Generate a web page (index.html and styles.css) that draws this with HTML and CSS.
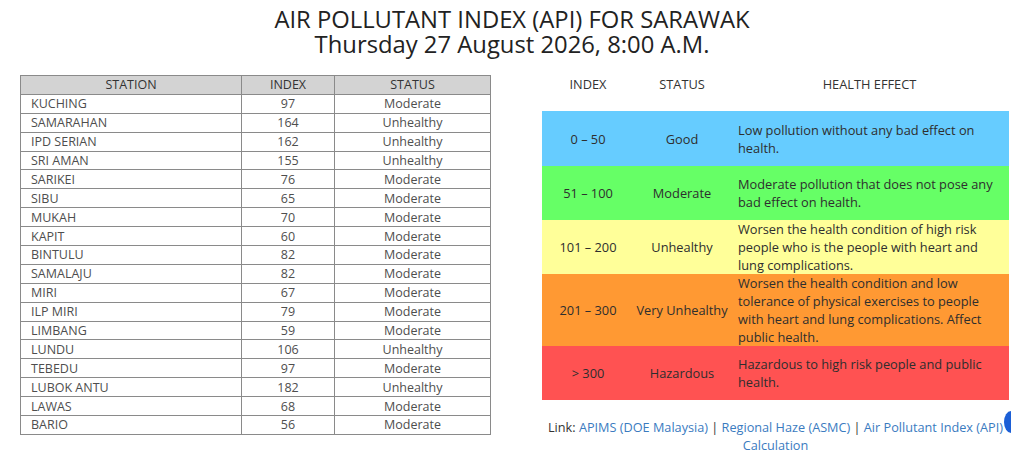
FILE: index.html
```html
<!DOCTYPE html>
<html>
<head>
<meta charset="utf-8">
<link rel="stylesheet" href="styles.css">
</head>
<body>
<header class="title">
  <h1>AIR POLLUTANT INDEX (API) FOR SARAWAK</h1>
  <h2>Thursday 27 August 2026, 8:00 A.M.</h2>
</header>
<main class="content">
  <table class="stations">
    <thead>
      <tr><th class="c-station">STATION</th><th class="c-index">INDEX</th><th class="c-status">STATUS</th></tr>
    </thead>
    <tbody>
      <tr><td>KUCHING</td><td>97</td><td>Moderate</td></tr>
      <tr><td>SAMARAHAN</td><td>164</td><td>Unhealthy</td></tr>
      <tr><td>IPD SERIAN</td><td>162</td><td>Unhealthy</td></tr>
      <tr><td>SRI AMAN</td><td>155</td><td>Unhealthy</td></tr>
      <tr><td>SARIKEI</td><td>76</td><td>Moderate</td></tr>
      <tr><td>SIBU</td><td>65</td><td>Moderate</td></tr>
      <tr><td>MUKAH</td><td>70</td><td>Moderate</td></tr>
      <tr><td>KAPIT</td><td>60</td><td>Moderate</td></tr>
      <tr><td>BINTULU</td><td>82</td><td>Moderate</td></tr>
      <tr><td>SAMALAJU</td><td>82</td><td>Moderate</td></tr>
      <tr><td>MIRI</td><td>67</td><td>Moderate</td></tr>
      <tr><td>ILP MIRI</td><td>79</td><td>Moderate</td></tr>
      <tr><td>LIMBANG</td><td>59</td><td>Moderate</td></tr>
      <tr><td>LUNDU</td><td>106</td><td>Unhealthy</td></tr>
      <tr><td>TEBEDU</td><td>97</td><td>Moderate</td></tr>
      <tr><td>LUBOK ANTU</td><td>182</td><td>Unhealthy</td></tr>
      <tr><td>LAWAS</td><td>68</td><td>Moderate</td></tr>
      <tr><td>BARIO</td><td>56</td><td>Moderate</td></tr>
    </tbody>
  </table>

  <section class="legend">
    <div class="legend-head">
      <div>INDEX</div><div>STATUS</div><div>HEALTH EFFECT</div>
    </div>
    <div class="band good">
      <div class="b-index">0 – 50</div><div class="b-status">Good</div>
      <div class="b-effect">Low pollution without any bad effect on health.</div>
    </div>
    <div class="band moderate">
      <div class="b-index">51 – 100</div><div class="b-status">Moderate</div>
      <div class="b-effect">Moderate pollution that does not pose any bad effect on health.</div>
    </div>
    <div class="band unhealthy">
      <div class="b-index">101 – 200</div><div class="b-status">Unhealthy</div>
      <div class="b-effect">Worsen the health condition of high risk people who is the people with heart and lung complications.</div>
    </div>
    <div class="band very">
      <div class="b-index">201 – 300</div><div class="b-status">Very Unhealthy</div>
      <div class="b-effect">Worsen the health condition and low tolerance of physical exercises to people with heart and lung complications. Affect public health.</div>
    </div>
    <div class="band hazardous">
      <div class="b-index">&gt; 300</div><div class="b-status">Hazardous</div>
      <div class="b-effect">Hazardous to high risk people and public health.</div>
    </div>
    <p class="links">Link: <a href="#">APIMS (DOE Malaysia)</a> | <a href="#">Regional Haze (ASMC)</a> | <a href="#">Air Pollutant Index (API) Calculation</a></p>
  </section>
</main>
<div class="edge-button"></div>
</body>
</html>
```

FILE: styles.css
```css
html, body {
  margin: 0;
  padding: 0;
  background: #ffffff;
}
body {
  font-family: "Open Sans", "DejaVu Sans", sans-serif;
  color: #333333;
  width: 1024px;
  height: 462px;
  overflow: hidden;
  position: relative;
}
.title {
  text-align: center;
  padding-top: 7px;
  color: #222222;
}
.title h1, .title h2 {
  margin: 0;
  font-weight: 400;
  font-size: 23.8px;
  line-height: 25px;
}
.content {
  display: flex;
  align-items: flex-start;
  padding-left: 20px;
  margin-top: 18px;
}
.stations {
  width: 471px;
  border-collapse: collapse;
  font-size: 12.5px;
  color: #4e4e4e;
  border: 1px solid #8a8a8a;
}
.stations th, .stations td {
  border: 1px solid #8a8a8a;
  height: 17.9px;
  padding: 0 10px;
  line-height: 17px;
  font-weight: 400;
}
.stations th {
  background: #d3d3d3;
  color: #333333;
  text-align: center;
}
.stations td:nth-child(2), .stations td:nth-child(3) {
  text-align: center;
}
.c-station { width: 200px; }
.c-index { width: 72px; }
.legend {
  margin-left: 51px;
  width: 467px;
}
.legend-head, .band {
  display: grid;
  grid-template-columns: 92px 96px 1fr;
}
.legend-head {
  font-size: 12.8px;
  color: #333333;
  text-align: center;
  height: 24px;
  line-height: 18px;
  margin-bottom: 12px;
}
.band {
  font-size: 12.8px;
  color: #2e2e2e;
  min-height: 54px;
  align-items: center;
}
.b-index, .b-status {
  text-align: center;
}
.b-effect {
  padding: 0 8px 0 8px;
  line-height: 18px;
}
.good { background: #66ccff; height: 55px; }
.moderate { background: #66ff66; }
.unhealthy { background: #ffff99; }
.very { background: #ff9933; height: 72px; }
.hazardous { background: #ff5252; }
.links {
  margin: 18px 0 0 0;
  font-size: 12.7px;
  line-height: 18px;
  text-align: center;
  color: #333333;
}
.links a {
  color: #3a7bbf;
  text-decoration: none;
}
.edge-button {
  position: absolute;
  left: 1004px;
  top: 411px;
  width: 7px;
  height: 22px;
  background: #1c5fd6;
  border-radius: 7px 0 0 7px / 11px 0 0 11px;
}
```
